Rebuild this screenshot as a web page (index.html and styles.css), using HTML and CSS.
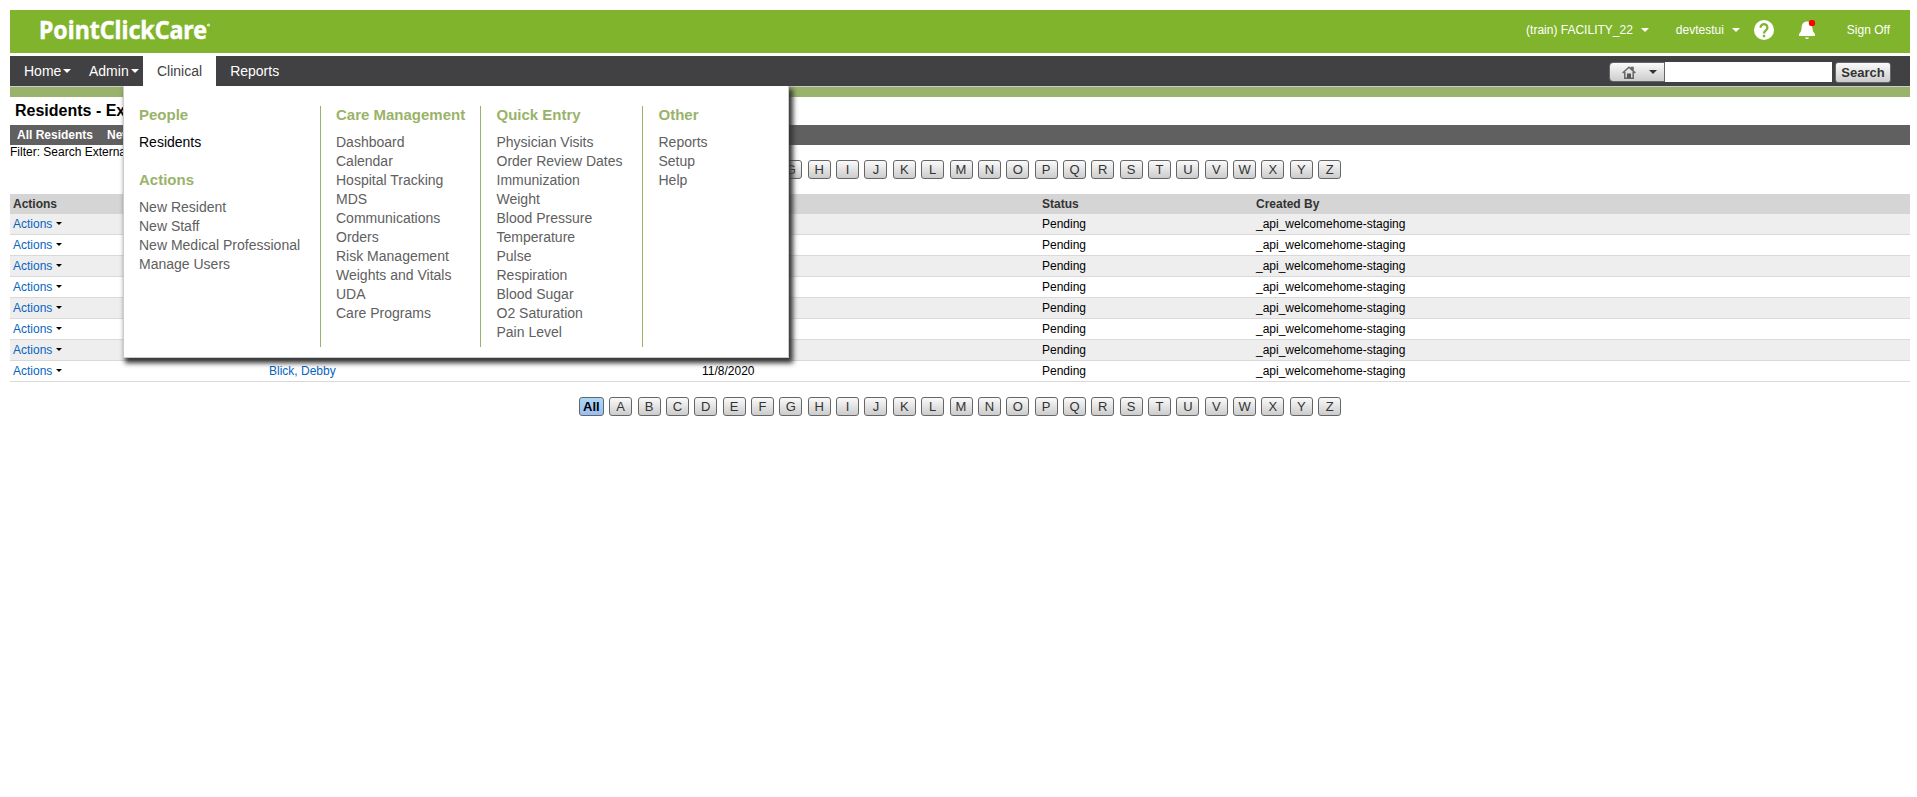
FILE: index.html
```html
<!DOCTYPE html>
<html lang="en">
<head>
    <meta charset="UTF-8">
    <meta name="viewport" content="width=device-width, initial-scale=1.0">
    <title>Residents</title>
    <link rel="stylesheet" href="styles.css">
</head>
<body>
    <header class="header">
        <svg class="logo" width="172" height="30" viewBox="0 0 172 30">
            <text class="logo-text" x="-1" y="24" textLength="168" lengthAdjust="spacingAndGlyphs">PointClickCare</text>
            <circle cx="168.500" cy="10" r="1.600" fill-opacity=".75"/>
        </svg>
        <div class="account">
            <a class="facility" href="#">(train) FACILITY_22<span class="caret"></span></a>
            <a class="user" href="#">devtestui<span class="caret"></span></a>
            <svg class="help" width="20" height="20" viewBox="0 0 20 20">
                <circle cx="10" cy="10" r="10" fill="#fff"/>
                <path d="M6.600 7.700a3.400 3.400 0 1 1 5.700 2.300C11 11.200 10 11.600 10 13.400" fill="none" stroke="#80b42c" stroke-width="2.300"/>
                <rect x="8.800" y="14.800" width="2.400" height="2.400" fill="#80b42c"/>
            </svg>
            <svg class="bell" width="18" height="20" viewBox="0 0 18 20">
                <path d="M8.500 1.500C5 2 3.800 4.500 3.600 7.500c-.2 3-.6 4.500-2.600 6.500V16h16v-2c-2-2-2.400-3.500-2.600-6.500C14.200 4 12.500 1.500 8.500 1.500z" fill="#fff"/>
                <path d="M7 17.500h4q-.5 1.500-2 1.500t-2-1.500z" fill="#fff"/>
                <circle cx="14" cy="3" r="3.200" fill="#f00"/>
            </svg>
            <a class="signoff" href="#">Sign Off</a>
        </div>
    </header>

    <nav class="nav">
        <a class="nav-home" href="#">Home<span class="caret"></span></a>
        <a class="nav-admin" href="#">Admin<span class="caret"></span></a>
        <a class="nav-tab active" href="#">Clinical</a>
        <a class="nav-tab" href="#">Reports</a>
        <form class="search">
            <button type="button" class="scope">
                <svg width="14" height="13" viewBox="0 0 14 13">
                    <path d="M.6 7 7 1.200l2.500 2.300V1.500H11v3.400L13.400 7M2.800 6v6.200h8.400V6" fill="none" stroke="#666" stroke-width="1.500"/>
                    <rect x="5" y="7.500" width="4" height="4.500" fill="#555"/>
                </svg>
                <span class="caret"></span>
            </button>
            <input type="text" class="search-box">
            <button type="button" class="search-button">Search</button>
        </form>

        <!-- Clinical menu -->
        <div class="menu">
            <div class="menu-column people">
                <h3>People</h3>
                <ul>
                    <li class="current">Residents</li>
                </ul>
                <h3>Actions</h3>
                <ul>
                    <li>New Resident</li>
                    <li>New Staff</li>
                    <li>New Medical Professional</li>
                    <li>Manage Users</li>
                </ul>
            </div>
            <div class="menu-column care">
                <h3>Care Management</h3>
                <ul>
                    <li>Dashboard</li>
                    <li>Calendar</li>
                    <li>Hospital Tracking</li>
                    <li>MDS</li>
                    <li>Communications</li>
                    <li>Orders</li>
                    <li>Risk Management</li>
                    <li>Weights and Vitals</li>
                    <li>UDA</li>
                    <li>Care Programs</li>
                </ul>
            </div>
            <div class="menu-column entry">
                <h3>Quick Entry</h3>
                <ul>
                    <li>Physician Visits</li>
                    <li>Order Review Dates</li>
                    <li>Immunization</li>
                    <li>Weight</li>
                    <li>Blood Pressure</li>
                    <li>Temperature</li>
                    <li>Pulse</li>
                    <li>Respiration</li>
                    <li>Blood Sugar</li>
                    <li>O2 Saturation</li>
                    <li>Pain Level</li>
                </ul>
            </div>
            <div class="menu-column other">
                <h3>Other</h3>
                <ul>
                    <li>Reports</li>
                    <li>Setup</li>
                    <li>Help</li>
                </ul>
            </div>
        </div>
    </nav>
    <div class="stripe"></div>

    <h1>Residents - External</h1>
    <div class="toolbar">
        <a href="#">All Residents</a>
        <a href="#">New</a>
    </div>
    <p class="filter">Filter: Search External</p>
    <div class="pager pager-top"></div>

    <table>
        <thead>
            <tr>
                <th class="col-actions">Actions</th>
                <th class="col-name"></th>
                <th class="col-date"></th>
                <th class="col-status">Status</th>
                <th>Created By</th>
            </tr>
        </thead>
        <tbody id="residents"></tbody>
    </table>
    <div class="pager pager-bottom"></div>

    <script>
        const letters = ['All', ...'ABCDEFGHIJKLMNOPQRSTUVWXYZ'];
        document.querySelectorAll('.pager').forEach(pager => {
            letters.forEach(letter => {
                const button = document.createElement('button');
                button.textContent = letter;
                if (letter === 'All') button.className = 'all';
                pager.appendChild(button);
            });
        });

        const names = ['', '', '', '', '', '', '', 'Blick, Debby'];
        const tbody = document.getElementById('residents');
        names.forEach(name => {
            const row = tbody.insertRow();
            row.innerHTML = `
                <td><a href="#">Actions</a><span class="caret"></span></td>
                <td><a href="#">${name}</a></td>
                <td>${name ? '11/8/2020' : ''}</td>
                <td>Pending</td>
                <td>_api_welcomehome-staging</td>`;
        });
    </script>
</body>
</html>
```
FILE: styles.css
```css
* {
    margin: 0;
    padding: 0;
    box-sizing: border-box;
}

body {
    width: 1900px;
    margin: 10px 0 0 10px;
    font-family: Arial, "Liberation Sans", sans-serif;
    font-size: 12px;
    color: #000;
    background: #fff;
}

a {
    text-decoration: none;
}

ul {
    list-style: none;
}

.caret {
    display: inline-block;
    border: 3px solid transparent;
    border-top-color: currentColor;
    border-bottom: 0;
}

/* Header */
.header {
    display: flex;
    justify-content: space-between;
    height: 43px;
    background: #80b42c;
}

.logo {
    margin: 5px 0 0 30px;
    fill: #fff;
    overflow: visible;
}

.logo-text {
    font: bold 25px "Noto Sans", sans-serif;
    stroke: #fff;
    stroke-width: 0.5px;
}

.account {
    display: flex;
    align-items: center;
    height: 40px;
    padding-right: 20px;
}

.account a {
    color: #fff;
}

.account .caret {
    border-width: 4px 4px 0;
    margin-left: 8px;
    vertical-align: 2px;
}

.user {
    margin-left: 26px;
}

.facility {
    margin-right: 1px;
}

.help {
    margin-left: 14px;
}

.bell {
    margin-left: 24px;
}

.signoff {
    margin-left: 31px;
}

/* Navigation */
.nav {
    position: relative;
    display: flex;
    height: 30px;
    margin-top: 3px;
    background: #414042;
    font-size: 14px;
    line-height: 30px;
}

.nav > a {
    color: #fff;
}

.nav > a .caret {
    border-width: 4px 4px 0;
    margin-left: 2px;
    vertical-align: 3px;
}

.nav-home {
    width: 65px;
    padding-left: 14px;
}

.nav-admin {
    width: 68px;
    padding-left: 14px;
}

.nav-tab {
    padding: 0 14px;
}

.nav > .active {
    background: #fff;
    color: #414042;
}

.search {
    display: flex;
    align-items: flex-start;
    margin: 6px 19px 0 auto;
}

button {
    height: 19px;
    border: 1px solid #666;
    border-radius: 3px;
    background: linear-gradient(#fafafa, #ccc);
    color: #333;
    font: 13px/15px Arial, "Liberation Sans", sans-serif;
}

.search .scope {
    display: flex;
    align-items: center;
    gap: 13px;
    width: 56px;
    height: 20px;
    padding-left: 12px;
    border-radius: 4px 0 0 4px;
}

.scope .caret {
    border-width: 4px 4px 0;
}

.search-box {
    width: 167px;
    height: 20px;
    border: 0;
    background: #fff;
}

.search .search-button {
    width: 56px;
    height: 21px;
    margin-left: 3px;
    font-weight: bold;
}

/* Clinical menu */
.menu {
    position: absolute;
    top: 30px;
    left: 113px;
    z-index: 10;
    display: flex;
    width: 666px;
    height: 272px;
    padding-top: 20px;
    border: 1px solid #ccc;
    border-top: 0;
    background: #fff;
    box-shadow: 3px 4px 5px 1px #333;
    clip-path: inset(0 -20px -20px -20px);
    color: #606060;
    line-height: 19px;
}

.menu-column {
    height: 241px;
    padding-left: 15px;
    border-right: 1px solid #99b36a;
}

.menu-column:last-child {
    border-right: 0;
}

.people {
    width: 197px;
}

.care {
    width: 160px;
}

.entry {
    width: 162px;
}

.entry,
.other {
    padding-left: 15.5px;
}

.menu h3 {
    margin-bottom: 9px;
    color: #99b36a;
    font-size: 15px;
    line-height: 18px;
}

.menu ul + h3 {
    margin-top: 19px;
}

.menu .current {
    color: #000;
}

/* Page title and toolbar */
.stripe {
    height: 11px;
    border-top: 1px solid #ccc;
    background: #99b36a;
}

h1 {
    height: 28px;
    padding-left: 5px;
    font-size: 16px;
    line-height: 27px;
}

.toolbar {
    display: flex;
    gap: 14px;
    height: 20px;
    padding-left: 7px;
    background: #606060;
    font-weight: bold;
    line-height: 20px;
}

.toolbar a {
    color: #fff;
}

.filter {
    height: 15px;
    line-height: 15px;
}

.pager {
    display: flex;
    justify-content: center;
    gap: 5.37px;
}

.pager button {
    width: 23px;
}

.pager .all {
    width: 25px;
    background: linear-gradient(#a9d9f8, #9bbcf2);
    color: #000;
    font-weight: bold;
}

.pager-top {
    margin-bottom: 15px;
}

.pager-bottom {
    margin-top: 15px;
}

/* Residents table */
table {
    width: 100%;
    border-spacing: 0;
    table-layout: fixed;
}

th {
    height: 20px;
    padding-left: 3px;
    background: #d5d5d5;
    color: #333;
    text-align: left;
}

td {
    height: 21px;
    padding-left: 3px;
    border-bottom: 1px solid #d9d9d9;
}

tbody tr:nth-child(odd) {
    background: #eee;
}

td a {
    color: #0765c0;
}

td .caret {
    margin-left: 3.5px;
    vertical-align: 3px;
}

.col-actions {
    width: 256px;
}

.col-name {
    width: 433px;
}

.col-date {
    width: 340px;
}

.col-status {
    width: 214px;
}
```
